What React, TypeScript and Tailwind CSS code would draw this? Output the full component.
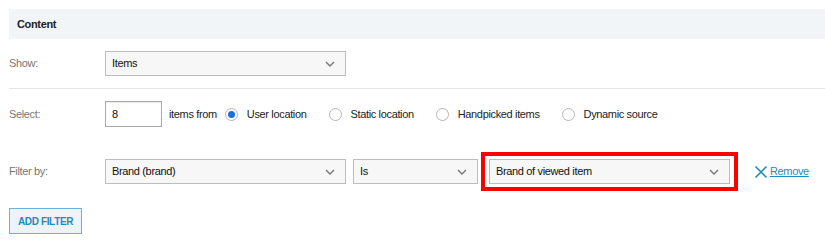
const font = { fontFamily: '"Liberation Sans", Arial, sans-serif' };

function Chevron() {
  return (
    <svg width="10" height="6" viewBox="0 0 10 6" className="shrink-0">
      <path d="M1 1l4 4 4-4" fill="none" stroke="#777" strokeWidth="1.4" />
    </svg>
  );
}

function Select({ value, width }: { value: string; width: string }) {
  return (
    <div className={`flex h-[25px] items-center justify-between border border-[#bdbdbd] bg-[#f7f7f7] pl-[6px] pr-[10px] text-[11px] text-[#111] ${width}`}>
      <span>{value}</span>
      <Chevron />
    </div>
  );
}

function Radio({ checked, label }: { checked?: boolean; label: string }) {
  return (
    <label className="flex items-center gap-[9px]">
      <span className="flex h-[13px] w-[13px] items-center justify-center rounded-full border border-[#b5b5b5] bg-white">
        {checked && <span className="h-[7px] w-[7px] rounded-full bg-[#1f6fd8]" />}
      </span>
      <span>{label}</span>
    </label>
  );
}

export default function App() {
  return (
    <div className="h-[240px] w-[825px] bg-white pl-[9px] pt-[9px] text-[11px] tracking-[-0.35px] text-[#222]" style={font}>
      <div className="flex h-[30px] items-center bg-[#f2f5f8] pl-[8px] text-[11px] font-bold text-[#222]">
        Content
      </div>

      <div className="flex h-[50px] items-center border-b border-[#e6e6e6]">
        <span className="w-[96px] text-[#777]">Show:</span>
        <Select value="Items" width="w-[241px]" />
      </div>

      <div className="flex h-[50px] items-center">
        <span className="w-[96px] text-[#777]">Select:</span>
        <div className="flex h-[26px] w-[57px] items-center border border-[#aaa] pl-[6px] text-[#111] shadow-[inset_0_1px_1px_rgba(0,0,0,0.08)]">
          8
        </div>
        <span className="ml-[7px] mr-[8px]">items from</span>
        <div className="flex items-center gap-[22px]">
          <Radio checked label="User location" />
          <Radio label="Static location" />
          <Radio label="Handpicked items" />
          <Radio label="Dynamic source" />
        </div>
      </div>

      <div className="mt-[13px] flex h-[39px] items-center">
        <span className="w-[96px] text-[#777]">Filter by:</span>
        <Select value="Brand (brand)" width="w-[241px]" />
        <div className="ml-[7px]">
          <Select value="Is" width="w-[125px]" />
        </div>
        <div className="ml-[3px] border-4 border-[#f00] px-[4px] py-[3px]">
          <Select value="Brand of viewed item" width="w-[241px]" />
        </div>
        <a className="ml-[16px] flex items-center gap-[2px] text-[#1b8cc0]">
          <svg width="14" height="14" viewBox="0 0 14 14">
            <path d="M1.5 1.5l11 11M12.5 1.5l-11 11" stroke="#1b8cc0" strokeWidth="1.6" />
          </svg>
          <span className="underline">Remove</span>
        </a>
      </div>

      <button className="mt-[17px] h-[26px] w-[73px] border border-[#6fb0d8] bg-[#eef3f7] text-[10px] font-bold text-[#1b8cc0]">
        ADD FILTER
      </button>
    </div>
  );
}
